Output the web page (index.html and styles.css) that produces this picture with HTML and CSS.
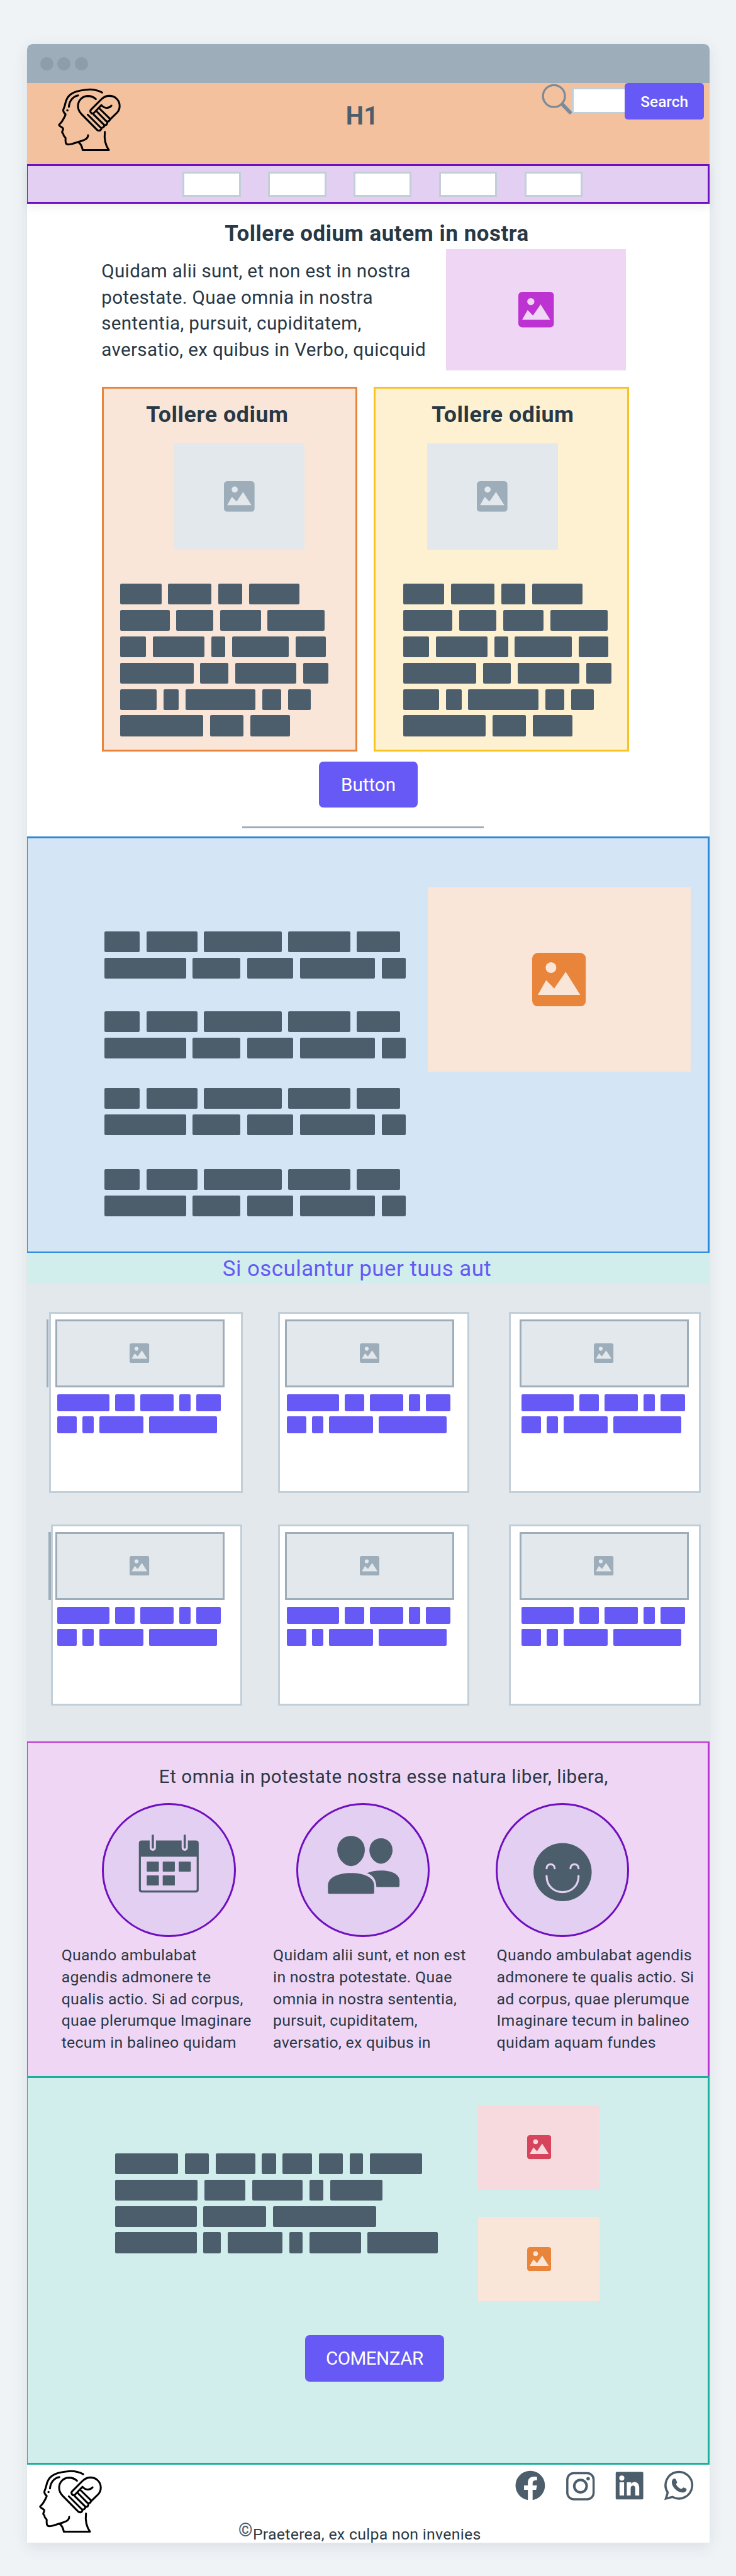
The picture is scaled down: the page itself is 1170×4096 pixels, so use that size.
FILE: index.html
```html
<!DOCTYPE html>
<html lang="la">
<head>
<meta charset="utf-8">
<title>Wireframe</title>
<link rel="stylesheet" href="styles.css">
</head>
<body>
<svg class="sprite" aria-hidden="true">
  <symbol id="picture" viewBox="0 0 100 100">
    <path fill="currentColor" fill-rule="evenodd" d="M11 0H89A11 11 0 0 1 100 11V89A11 11 0 0 1 89 100H11A11 11 0 0 1 0 89V11A11 11 0 0 1 11 0ZM35 17.5A10 10 0 1 0 35 37.500A10 10 0 1 0 35 17.500ZM10.500 78.500H89.500L62.500 35.500L41 66.500L26 51Z"/>
  </symbol>
  <symbol id="logo" viewBox="130 60 360 355">
    <g fill="none" stroke="#000" stroke-width="10.500" stroke-linecap="round" stroke-linejoin="round">
      <path d="M379 88C350 73 325 68 290 73C250 77 225 84 207 98C188 112 181 130 177 150C175 162 171 170 167 180C164 190 168 197 179 207C176 221 165 236 158 248C152 256 145 261 143 266C146 274 158 276 165 284C168 293 160 298 160 306C163 312 170 314 168 322C168 328 178 330 179 338C179 348 176 362 184 370C192 376 205 371 215 369L270 352C290 346 303 339 302 322"/>
      <path d="M250 360C262 368 269 385 273 403H416C398 377 389 345 394 304"/>
      <path d="M248 104C221 109 200 131 197 166"/>
      <path d="M345 124C332 112 318 107 300 107C270 108 247 132 247 162C247 181 254 194 266 206L350 291C359 300 370 299 375 286"/>
      <path d="M300 209L367 276C377 286 391 280 391 266L331 207"/>
      <path d="M349 191L399 242C409 252 421 246 422 232L366 177"/>
      <path d="M391 266C401 270 410 259 407 249"/>
      <path d="M422 236L462 197C472 186 475 175 475 162C475 130 450 106 418 106C400 106 388 113 377 123L319 181C309 191 318 205 331 203L375 157C390 176 416 177 430 160"/>
    </g>
    <circle cx="189" cy="186" r="6"/>
  </symbol>
</svg>

<div class="page">
<div class="window">
  <div class="titlebar"><i class="dot"></i><i class="dot"></i><i class="dot"></i></div>

  <header class="header">
    <svg class="logo"><use href="#logo"/></svg>
    <h1 class="header-title">H1</h1>
    <form class="search">
      <svg class="search-icon" viewBox="54 38 168 168">
        <circle cx="121.500" cy="106" r="60" fill="none" stroke="#7b8b99" stroke-width="11.500"/>
        <path d="M168 152L209 195" stroke="#7b8b99" stroke-width="20" stroke-linecap="round"/>
      </svg>
      <span class="search-field"></span>
      <button class="button button-search" type="button">Search</button>
    </form>
  </header>

  <nav class="nav">
    <a class="nav-item"></a><a class="nav-item"></a><a class="nav-item"></a><a class="nav-item"></a><a class="nav-item"></a>
  </nav>

  <section class="intro">
    <h2 class="heading">Tollere odium autem in nostra</h2>
    <div class="intro-row">
      <p class="lead">Quidam alii sunt, et non est in nostra<br>potestate. Quae omnia in nostra<br>sententia, pursuit, cupiditatem,<br>aversatio, ex quibus in Verbo, quicquid</p>
      <div class="picture picture-magenta"><svg><use href="#picture"/></svg></div>
    </div>
    <div class="cards">
      <article class="card card-orange">
        <h3 class="heading card-title">Tollere odium</h3>
        <div class="picture card-picture"><svg><use href="#picture"/></svg></div>
        <div class="words words-card" data-words="75 79 44 92 / 90 67.5 74 104 / 47 94.5 25 104 54.5 / 133.500 51 112 46 / 66 28 128 34.500 41.500 / 151 61 72.500"></div>
      </article>
      <article class="card card-yellow">
        <h3 class="heading card-title">Tollere odium</h3>
        <div class="picture card-picture"><svg><use href="#picture"/></svg></div>
        <div class="words words-card" data-words="75 79 44 92 / 90 67.5 74 104 / 47 94.5 25 104 54.5 / 133.500 51 112 46 / 66 28 128 34.500 41.500 / 151 61 72.500"></div>
      </article>
    </div>
    <button class="button button-intro" type="button">Button</button>
    <hr class="rule">
  </section>

  <section class="topics">
    <div class="topics-list">
      <div class="words" data-words="65 92.500 141.500 113 78.500 / 149 87.500 84 137 43.500"></div>
      <div class="words" data-words="65 92.500 141.500 113 78.500 / 149 87.500 84 137 43.500"></div>
      <div class="words" data-words="65 92.500 141.500 113 78.500 / 149 87.500 84 137 43.500"></div>
      <div class="words" data-words="65 92.500 141.500 113 78.500 / 149 87.500 84 137 43.500"></div>
    </div>
    <div class="picture picture-topics"><svg><use href="#picture"/></svg></div>
  </section>

  <h2 class="gallery-title">Si osculantur puer tuus aut</h2>
  <section class="gallery">
    <article class="tile tile-first tile-wide">
      <div class="picture tile-picture"><svg><use href="#picture"/></svg></div>
      <div class="words words-tile" data-words="96 35 60.500 21 45 / 36 20.500 80 124.500"></div>
    </article>
    <article class="tile tile-second">
      <div class="picture tile-picture"><svg><use href="#picture"/></svg></div>
      <div class="words words-tile" data-words="96 35 60.500 21 45 / 36 20.500 80 124.500"></div>
    </article>
    <article class="tile tile-third">
      <div class="picture tile-picture"><svg><use href="#picture"/></svg></div>
      <div class="words words-tile" data-words="96 35 60.500 21 45 / 36 20.500 80 124.500"></div>
    </article>
    <article class="tile tile-first tile-inset">
      <div class="picture tile-picture"><svg><use href="#picture"/></svg></div>
      <div class="words words-tile" data-words="96 35 60.500 21 45 / 36 20.500 80 124.500"></div>
    </article>
    <article class="tile tile-second">
      <div class="picture tile-picture"><svg><use href="#picture"/></svg></div>
      <div class="words words-tile" data-words="96 35 60.500 21 45 / 36 20.500 80 124.500"></div>
    </article>
    <article class="tile tile-third">
      <div class="picture tile-picture"><svg><use href="#picture"/></svg></div>
      <div class="words words-tile" data-words="96 35 60.500 21 45 / 36 20.500 80 124.500"></div>
    </article>
  </section>

  <section class="features">
    <h2 class="features-title">Et omnia in potestate nostra esse natura liber, libera,</h2>
    <div class="features-grid">
      <article class="feature feature-calendar">
        <div class="medal">
          <svg viewBox="30 42 708 708" fill="#4c5d6b">
            <path fill-rule="evenodd" d="M236 236H280V275A17 17 0 0 0 314 275V236H454V275A17 17 0 0 0 488 275V236H532Q547 236 547 251V504Q547 519 532 519H236Q221 519 221 504V251Q221 236 236 236ZM232 324V501Q232 508 239 508H529Q536 508 536 501V324Z"/>
            <rect x="291" y="203" width="12" height="77" rx="6"/><rect x="465" y="203" width="12" height="77" rx="6"/>
            <rect x="264" y="350" width="66" height="55" rx="4"/><rect x="351" y="350" width="66" height="55" rx="4"/><rect x="438" y="350" width="66" height="55" rx="4"/>
            <rect x="264" y="426" width="66" height="55" rx="4"/><rect x="351" y="426" width="66" height="55" rx="4"/>
          </svg>
        </div>
        <p class="feature-text">Quando ambulabat<br>agendis admonere te<br>qualis actio. Si ad corpus,<br>quae plerumque Imaginare<br>tecum in balineo quidam</p>
      </article>
      <article class="feature feature-people">
        <div class="medal">
          <svg viewBox="30 42 708 708" fill="#4c5d6b">
            <path d="M318 211C362 211 393 244 393 287C393 330 358 375 318 375C278 375 243 330 243 287C243 244 274 211 318 211Z"/>
            <path d="M481 224C518 224 544 252 544 289C544 324 515 362 481 362C447 362 418 324 418 289C418 252 444 224 481 224Z"/>
            <path d="M192 519V482C192 440 240 413 318 413C396 413 444 440 444 482V519Q444 526 437 526H199Q192 526 192 519Z"/>
            <path d="M404 414C425 404 452 399 481 399C545 399 582 422 582 455V482Q582 489 575 489H456C456 455 440 424 404 414Z"/>
          </svg>
        </div>
        <p class="feature-text">Quidam alii sunt, et non est<br>in nostra potestate. Quae<br>omnia in nostra sententia,<br>pursuit, cupiditatem,<br>aversatio, ex quibus in</p>
      </article>
      <article class="feature feature-smile">
        <div class="medal">
          <svg viewBox="30 42 708 708">
            <circle cx="384" cy="408" r="158.500" fill="#4c5d6b"/>
            <path d="M297 387C297 358 341 358 341 387M427 387C427 358 471 358 471 387M297 429C297 546 471 546 471 429" fill="none" stroke="#e2cff2" stroke-width="11" stroke-linecap="round"/>
          </svg>
        </div>
        <p class="feature-text">Quando ambulabat agendis<br>admonere te qualis actio. Si<br>ad corpus, quae plerumque<br>Imaginare tecum in balineo<br>quidam aquam fundes</p>
      </article>
    </div>
  </section>

  <section class="start">
    <div class="start-row">
      <div class="words words-start" data-words="115 43.500 72.500 25.500 54 43.500 24.500 96 / 150 75.500 92 25.500 96 / 148.500 115 188 / 148.500 32 100 24.500 94 128.500"></div>
      <div class="start-pictures">
        <div class="picture picture-small picture-red"><svg><use href="#picture"/></svg></div>
        <div class="picture picture-small picture-orange"><svg><use href="#picture"/></svg></div>
      </div>
    </div>
    <button class="button button-start" type="button">COMENZAR</button>
  </section>

  <footer class="footer">
    <svg class="logo logo-footer"><use href="#logo"/></svg>
    <p class="copyright"><b class="copyright-mark">©</b>Praeterea, ex culpa non invenies</p>
    <svg class="social" viewBox="120 80 980 172" fill="#4c5d6b">
      <path d="M189 246A80.500 80.500 0 1 1 215 246V190H234L239 166H215V155C215 142 222 138 239 138V119C205 113 189 126 189 152V166H168V190H189Z"/>
      <rect x="405" y="99" width="144" height="143" rx="35" fill="none" stroke="#4c5d6b" stroke-width="12"/>
      <circle cx="477" cy="170" r="34" fill="none" stroke="#4c5d6b" stroke-width="14"/>
      <circle cx="519" cy="129" r="9.500"/>
      <path fill-rule="evenodd" d="M676 92H815Q821 92 821 98V237Q821 243 815 243H676Q670 243 670 237V98Q670 92 676 92ZM691 149V221H716V149ZM703.500 112A14 14 0 1 0 703.500 140A14 14 0 1 0 703.500 112ZM731 149V221H752V181C752 163 777 162 777 181V221H799V179C799 145 766 139 755 158V149Z"/>
      <path fill="none" stroke="#4c5d6b" stroke-width="12" d="M945 238L955 205A73 73 0 1 1 981 229Z"/>
      <path d="M988 129C994 127 999 130 1001 136L1006 148C1008 153 999 157 1001 161C1007 173 1016 180 1027 185C1033 187 1038 176 1042 177L1056 183C1060 186 1058 193 1055 197C1047 207 1033 206 1021 202C999 194 983 174 979 160C975 145 979 133 988 129Z"/>
    </svg>
  </footer>
</div>
</div>
<script src="script.js"></script>
</body>
</html>
```

FILE: styles.css
```css
* { box-sizing: border-box; }

html, body { margin: 0; background: #eff3f6; }

body {
  min-height: 4096px;
  font-family: Roboto, "Liberation Sans", sans-serif;
  color: #293845;
}

h1, h2, h3, p { margin: 0; }

svg { display: block; }

.sprite { position: absolute; width: 0; height: 0; }

.page {
  zoom: 0.8714;
  padding: 80px 0 59px 49px;
}

.window {
  display: flex;
  flex-direction: column;
  width: 1246px;
  background: #fff;
  border-radius: 10px 10px 0 0;
  box-shadow: 0 8px 26px rgba(41, 56, 69, 0.1);
}

/* Title bar */
.titlebar {
  display: flex;
  align-items: center;
  gap: 8px;
  height: 72px;
  padding-left: 24px;
  background: #9eadba;
  border-radius: 10px 10px 0 0;
}

.dot { width: 24px; height: 24px; border-radius: 50%; background: #8d9dab; }

/* Header */
.header {
  display: flex;
  align-items: flex-start;
  height: 148px;
  padding-right: 11px;
  background: #f4c19e;
}

.logo { width: 120px; height: 118.3px; margin: 8px 0 0 54.3px; }

.header-title {
  margin: 37px 0 0 407.7px;
  font-size: 46px;
  line-height: 46px;
  color: #4c5d6b;
}

.search { display: flex; align-items: flex-start; margin-left: auto; }

.search-icon { width: 56px; height: 56px; margin-top: 1px; }

.search-field {
  width: 97px;
  height: 48px;
  margin-top: 8px;
  margin-left: -1px;
  background: #fff;
  border: 4px solid #c2ced8;
  border-right: 0;
}

.button {
  padding: 0;
  border: 0;
  border-radius: 8px;
  background: #6659f5;
  color: #fff;
  font-family: inherit;
  font-weight: 400;
}

.button-search { width: 144px; height: 66px; border-radius: 6px; font-size: 28px; font-weight: 500; }

/* Navigation */
.nav {
  position: relative;
  display: flex;
  gap: 50px;
  height: 72px;
  padding: 10px 0 0 283px;
  background: #e2cff2;
  border: 4px solid #6f0fbf;
  border-width: 4px 3.5px 4px 1.2px;
  box-shadow: 0 8px 16px rgba(0, 0, 0, 0.06);
}

.nav-item { width: 106px; height: 46px; background: #fff; border: 4px solid #c2ced8; }

/* Pictures */
.picture {
  display: flex;
  align-items: center;
  justify-content: center;
  background: #e2e8ec;
  color: #9eadba;
}

.picture svg { width: 56px; height: 56px; }

.picture-magenta { width: 328px; height: 222px; background: #f0d6f5; color: #bd33d1; }
.picture-magenta svg { width: 65px; height: 65px; }

.picture-small { width: 222px; height: 154px; }
.picture-small svg { width: 44px; height: 44px; }
.picture-red { background: #f6dade; color: #d6455b; }
.picture-orange { background: #f9e6d8; color: #e8853a; }

/* Redacted words */
.words { --bar: 38px; --gap: 12.3px; color: #4c5d6b; display: flex; flex-direction: column; gap: 10px; }
.words-line { display: flex; gap: var(--gap); height: var(--bar); }
.word { background: currentColor; border-radius: 2.5px; }

/* Intro */
.intro { height: 1154px; padding-top: 30px; }

.heading { font-size: 40px; line-height: 48px; font-weight: 700; letter-spacing: 0.65px; }

.intro > .heading { padding: 1px 0 0 31px; height: 48px; text-align: center; }

.intro-row { display: flex; margin-top: 4px; padding-left: 136px; }

.lead { width: 629px; padding-top: 17.5px; font-size: 34px; line-height: 48px; letter-spacing: 0.4px; white-space: nowrap; }

.cards { display: flex; gap: 30px; padding: 30px 0 0 137px; }

.card { width: 466px; height: 666px; padding-top: 24px; border: 4px solid; }
.card-orange { border-color: #e8853a; background: #f9e6d8; }
.card-yellow { border-color: #f9c322; background: #fdf1d1; }

.card-title { margin-left: 77px; font-size: 41px; }
.card-picture { width: 238px; height: 194px; margin: 28px 0 62px 128px; }
.words-card { --gap: 12.4px; margin-left: 30px; }

.card-yellow .card-title { margin-left: 102px; }
.card-yellow .card-picture { margin-left: 94px; }
.card-yellow .words-card { margin-left: 50px; }

.button-intro { display: block; width: 180px; height: 84px; margin: 18px 0 0 533px; font-size: 34px; }

.rule { width: 440px; height: 4px; margin: 34px 0 0 393px; border: 0; background: #9eadba; }

/* Topics */
.topics {
  display: flex;
  align-items: flex-start;
  height: 760px;
  background: #d4e6f6;
  border: solid #2b88da;
  border-width: 4px 3.5px 2.4px 1.2px;
}

.topics-list { width: 730px; padding: 170px 0 0 140px; }
.topics-list .words:nth-child(2) { margin-top: 60px; }
.topics-list .words:nth-child(3) { margin-top: 54px; }
.topics-list .words:nth-child(4) { margin-top: 62px; }

.picture-topics { width: 480px; height: 336px; margin-top: 90px; background: #f9e6d8; color: #e8853a; }
.picture-topics svg { width: 98px; height: 98px; }

/* Gallery */
.gallery-title {
  height: 56px;
  padding-left: 357px;
  background: #d1eeed;
  color: #6659f5;
  font-size: 40px;
  font-weight: 400;
  line-height: 59px;
  letter-spacing: 0.55px;
}

.gallery {
  display: grid;
  grid-template-columns: 418px 422px 349px;
  grid-auto-rows: 330px;
  row-gap: 58px;
  height: 836px;
  padding: 52px 0 0 40px;
  background: #e2e8ec;
}

.tile {
  position: relative;
  width: 349px;
  padding: 10px 0 0 9px;
  background: #fff;
  border: 4px solid #c2ced8;
}

.tile-wide { width: 354px; padding-left: 8px; }
.tile-inset { margin-left: 4px; padding-left: 4px; }
.tile-third { padding-left: 15px; }

/* Edge of the tile stacked behind the first column */
.tile-first::before {
  content: "";
  position: absolute;
  top: 10px;
  left: -8px;
  width: 4px;
  height: 124px;
  background: #9eadba;
}

.tile-picture { width: 309px; height: 124px; border: 4px solid #9eadba; }
.tile-picture svg { width: 36px; height: 36px; }

.words-tile { --bar: 31px; --gap: 10.4px; gap: 9px; margin: 13px 0 0 3.5px; color: #6659f5; }

/* Features */
.features {
  height: 610px;
  padding-top: 39px;
  background: #f0d6f5;
  border: solid #bd33d1;
  border-width: 2.4px 3.5px 0 1.2px;
}

.features-title {
  padding-left: 240px;
  font-size: 34px;
  font-weight: 400;
  line-height: 48px;
  letter-spacing: 0.6px;
}

.features-grid { display: grid; grid-template-columns: 386px 406px 1fr; padding: 23px 0 0 62px; }

.medal { width: 244px; height: 244px; border: 4px solid #6f0fbf; border-radius: 50%; background: #e2cff2; }
.medal svg { width: 100%; height: 100%; }
.feature-calendar .medal { margin-left: 74px; }
.feature-people .medal { margin-left: 42px; }

.feature-text { margin-top: 14px; font-size: 28.5px; line-height: 40px; letter-spacing: 0.32px; white-space: nowrap; }
.feature-smile .feature-text { padding-left: 2px; }

/* Start */
.start {
  height: 710px;
  background: #d1eeed;
  border: solid #1bafa0;
  border-width: 4px 3.5px 4px 1.2px;
}

.start-row { display: flex; padding: 50px 0 0 160px; }
.words-start { width: 662px; padding-top: 88px; }
.start-pictures { display: flex; flex-direction: column; gap: 50px; }

.button-start { display: block; width: 254px; height: 84px; margin: 62px 0 0 506px; font-size: 34px; letter-spacing: -0.6px; }

/* Footer */
.footer { display: flex; align-items: flex-start; height: 142px; }

.logo-footer { margin: 8px 0 0 20px; }

.copyright {
  align-self: flex-end;
  margin-left: 246px;
  font-size: 28.5px;
  line-height: 30px;
  letter-spacing: 0.32px;
  white-space: nowrap;
}

.copyright-mark { position: relative; top: -6px; font-size: 33px; font-weight: 900; line-height: 1px; color: #4c5d6b; }

.social { width: 326.7px; height: 57.3px; margin: 8.7px 28px 0 auto; }
```

FILE: script.js
```js
// Draws each block of redacted words from its list of widths; "/" starts a new line.
document.querySelectorAll("[data-words]").forEach((block) => {
  block.dataset.words.split("/").forEach((row) => {
    const line = document.createElement("div");
    line.className = "words-line";
    row.trim().split(/\s+/).forEach((width) => {
      const word = document.createElement("span");
      word.className = "word";
      word.style.width = width + "px";
      line.append(word);
    });
    block.append(line);
  });
});
```
